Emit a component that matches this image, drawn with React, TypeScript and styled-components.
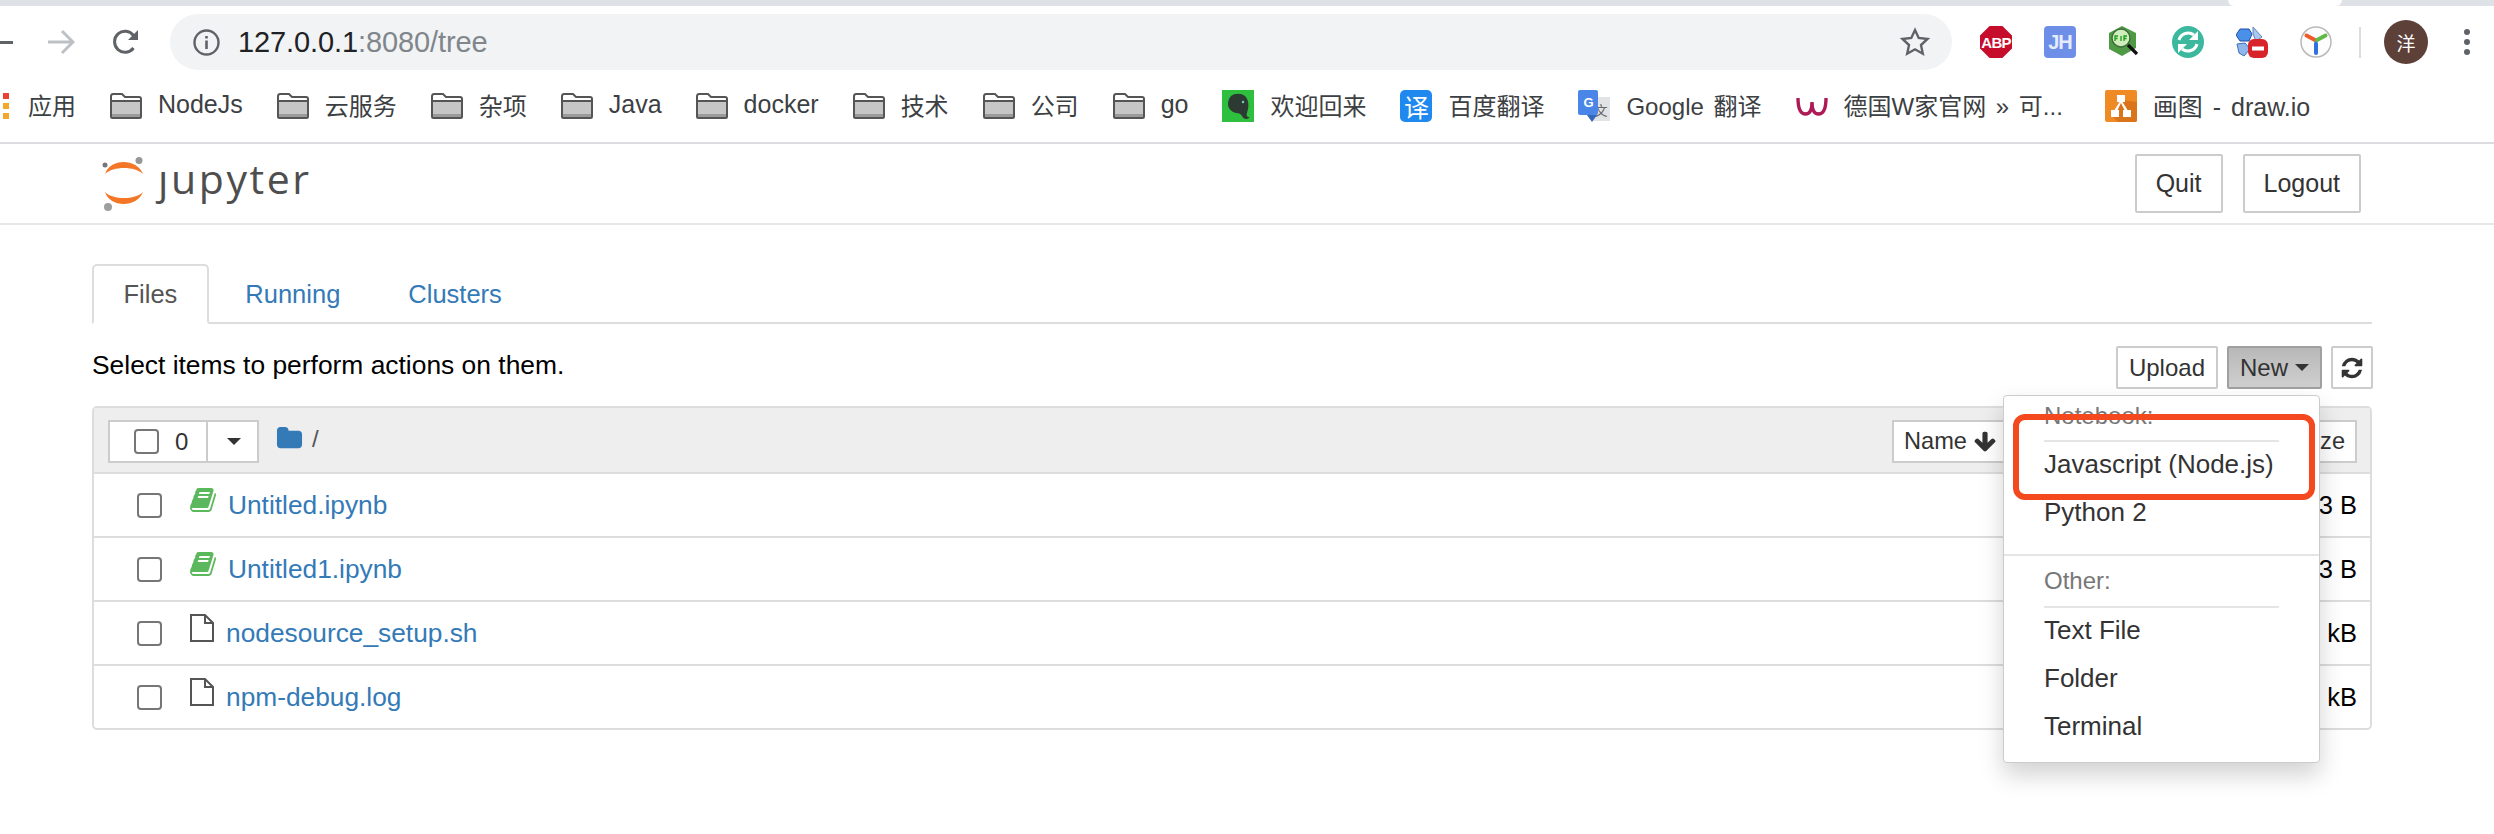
import { createGlobalStyle, styled } from 'styled-components';

const sans = `"Liberation Sans", "Noto Sans CJK SC", sans-serif`;

const GlobalStyle = createGlobalStyle`
  html, body {
    margin: 0;
    background: #fff;
    overflow: hidden;
  }
  * {
    box-sizing: border-box;
  }
`;

const Page = styled.div`
  position: relative;
  width: 2494px;
  height: 834px;
  overflow: hidden;
  font-family: ${sans};
  color: #333;
`;

/* browser chrome */

const TabStrip = styled.div`
  height: 6px;
  background: #dee1e6;
  padding-left: 2228px;
`;

const ActiveTabEdge = styled.div`
  width: 114px;
  height: 6px;
  background: #fff;
  border-radius: 0 0 6px 6px;
`;

const Toolbar = styled.div`
  display: flex;
  height: 70px;
  padding-top: 8px;
`;

const NavButtons = styled.div`
  display: flex;
  align-items: center;
  height: 56px;
`;

const BackStub = styled.span`
  width: 13px;
  height: 3px;
  background: #5f6368;
`;

const ForwardIcon = styled.svg`
  width: 28px;
  height: 26px;
  margin-left: 34px;
  fill: none;
  stroke: #bdc1c6;
  stroke-width: 3;
`;

const ReloadIcon = styled.svg`
  width: 28px;
  height: 28px;
  margin-left: 37px;
`;

const AddressBar = styled.div`
  display: flex;
  align-items: center;
  width: 1782px;
  height: 56px;
  margin-left: 30px;
  padding: 0 22px 0 23px;
  border-radius: 28px;
  background: #f1f3f4;
`;

const InfoIcon = styled.svg`
  width: 27px;
  height: 27px;
  margin-right: 18px;
`;

const Url = styled.div`
  font-size: 29px;
  color: #80868b;
  letter-spacing: -0.1px;
`;

const UrlHost = styled.span`
  color: #202124;
`;

const StarIcon = styled.svg`
  width: 30px;
  height: 30px;
  margin-left: auto;
  fill: none;
  stroke: #5f6368;
  stroke-width: 2.4;
`;

const Extensions = styled.div`
  display: flex;
  align-items: center;
  gap: 32px;
  height: 56px;
  margin-left: 28px;
`;

const ExtSvg = styled.svg`
  display: block;
  width: 32px;
  height: 32px;
`;

const AbpBadge = styled.span`
  display: flex;
  align-items: center;
  justify-content: center;
  width: 32px;
  height: 32px;
  background: #c70d2c;
  clip-path: polygon(30% 0, 70% 0, 100% 30%, 100% 70%, 70% 100%, 30% 100%, 0 70%, 0 30%);
  color: #fff;
  font-size: 15px;
  font-weight: 700;
  letter-spacing: -0.8px;
`;

const JhBadge = styled.span`
  display: flex;
  align-items: center;
  justify-content: center;
  width: 32px;
  height: 32px;
  border-radius: 4px;
  background: #6e8fe8;
  color: #e6ecfb;
  font-size: 20px;
  font-weight: 700;
  letter-spacing: -1px;
`;

const ToolbarDivider = styled.span`
  width: 2px;
  height: 31px;
  margin-left: 27px;
  background: #dadce0;
`;

const Avatar = styled.span`
  display: flex;
  align-items: center;
  justify-content: center;
  width: 44px;
  height: 44px;
  margin-left: 23px;
  border-radius: 50%;
  background: #5d4037;
  color: #fff;
  font-size: 19px;
`;

const MenuDots = styled.span`
  display: flex;
  flex-direction: column;
  gap: 4px;
  margin-left: 36px;
`;

const MenuDot = styled.span`
  width: 6px;
  height: 6px;
  border-radius: 50%;
  background: #5f6368;
`;

const BookmarkBar = styled.div`
  display: flex;
  align-items: center;
  gap: 34px;
  height: 68px;
  padding: 0 0 6px 3px;
  border-bottom: 2px solid #dadce0;
  font-size: 24px;
  word-spacing: 3px;
  color: #3c4043;
`;

const Bookmark = styled.div`
  display: flex;
  align-items: center;
  gap: 16px;
  white-space: nowrap;
`;

const BookmarkLabel = styled.span<{ $latin?: boolean; $trail?: number }>`
  margin-top: -3px;
  padding-right: ${(p) => p.$trail ?? 0}px;
  font-size: ${(p) => (p.$latin ? 25 : 24)}px;
`;

const AppsDots = styled.span`
  display: flex;
  flex-direction: column;
  gap: 4px;
  margin-right: 3px;
`;

const AppsDot = styled.span<{ $color: string }>`
  width: 6px;
  height: 6px;
  background: ${(p) => p.$color};
`;

const FolderSvg = styled.svg`
  display: block;
  width: 32px;
  height: 26px;
`;

const FaviconSvg = styled.svg`
  display: block;
  width: 32px;
  height: 32px;
`;

const BaiduFavicon = styled.span`
  display: flex;
  align-items: center;
  justify-content: center;
  width: 32px;
  height: 32px;
  border-radius: 5px;
  background: #2089f0;
  color: #fff;
  font-size: 25px;
`;

const GoogleFavicon = styled.span`
  position: relative;
  display: block;
  width: 32px;
  height: 32px;
`;

const GoogleBack = styled.span`
  position: absolute;
  right: 0;
  top: 7px;
  display: flex;
  align-items: center;
  justify-content: center;
  width: 19px;
  height: 24px;
  background: #e2e3e5;
  color: #666;
  font-size: 13px;
`;

const GoogleFront = styled.span`
  position: absolute;
  left: 0;
  top: 0;
  display: flex;
  align-items: center;
  justify-content: center;
  width: 20px;
  height: 25px;
  border-radius: 2px;
  background: #4a86e8;
  color: #fff;
  font-size: 13px;
  font-weight: 700;
`;

const GoogleTail = styled.span`
  position: absolute;
  left: 9px;
  top: 25px;
  border-top: 7px solid #3367b8;
  border-left: 5px solid transparent;
  border-right: 5px solid transparent;
`;

/* jupyter page */

const NavBar = styled.div`
  display: flex;
  align-items: center;
  justify-content: space-between;
  height: 81px;
  padding: 0 133px 0 102px;
  border-bottom: 2px solid #e7e7e7;
`;

const Brand = styled.div`
  display: flex;
  align-items: center;
  gap: 13px;
`;

const LogoMark = styled.svg`
  display: block;
  width: 43px;
  height: 54px;
`;

const LogoType = styled.span`
  margin-top: -10px;
  font-family: "Open Sans", sans-serif;
  font-size: 41px;
  letter-spacing: 2.6px;
  color: #4e4e4e;
  line-height: 1;
`;

const NavActions = styled.div`
  display: flex;
  gap: 20px;
`;

const NavButton = styled.button`
  height: 59px;
  padding: 0 19px;
  border: 2px solid #ccc;
  border-radius: 2px;
  background: #fff;
  color: #333;
  font: 25px ${sans};
`;

const Main = styled.div`
  padding: 39px 122px 0 92px;
`;

const TabBar = styled.div`
  display: flex;
  gap: 5px;
  height: 60px;
  border-bottom: 2px solid #ddd;
`;

const Tab = styled.div<{ $active?: boolean }>`
  display: flex;
  align-items: center;
  height: 60px;
  padding: 0 29.5px;
  border: 2px solid ${(p) => (p.$active ? '#ddd' : 'transparent')};
  border-bottom-color: ${(p) => (p.$active ? '#fff' : 'transparent')};
  border-radius: 5px 5px 0 0;
  background: ${(p) => (p.$active ? '#fff' : 'transparent')};
  color: ${(p) => (p.$active ? '#555' : '#337ab7')};
  font-size: 25.5px;
`;

const ActionRow = styled.div`
  display: flex;
  align-items: center;
  justify-content: space-between;
  height: 43px;
  margin: 22px -1px 17px 0;
`;

const Hint = styled.div`
  margin-top: -4px;
  color: #000;
  font-size: 26.4px;
`;

const ActionButtons = styled.div`
  display: flex;
  gap: 9px;
`;

const SmallButton = styled.button<{ $pressed?: boolean }>`
  display: flex;
  align-items: center;
  justify-content: center;
  gap: 7px;
  height: 43px;
  padding: 0 11px;
  border: 2px solid ${(p) => (p.$pressed ? '#a0a0a0' : '#ccc')};
  border-radius: 2px;
  background: ${(p) => (p.$pressed ? 'linear-gradient(#b8b8b8, #cfcfcf)' : '#fff')};
  color: #333;
  font: 24px ${sans};
`;

const RefreshButton = styled(SmallButton)`
  width: 42px;
  padding: 0;
`;

const Caret = styled.span`
  border-top: 7px solid #333;
  border-left: 7px solid transparent;
  border-right: 7px solid transparent;
`;

const Glyph = styled.svg<{ $size: number; $color?: string }>`
  display: block;
  flex: none;
  width: ${(p) => p.$size}px;
  height: ${(p) => p.$size}px;
  fill: ${(p) => p.$color ?? '#333'};
`;

const DropdownAnchor = styled.div`
  position: relative;
`;

const Dropdown = styled.div`
  position: absolute;
  top: 49px;
  right: 2px;
  z-index: 2;
  width: 317px;
  height: 368px;
  border: 1px solid #ccc;
  border-radius: 4px;
  background: #fff;
  box-shadow: 0 12px 24px rgba(0, 0, 0, 0.18);
`;

const MenuHeader = styled.div<{ $height: number; $lift: number }>`
  display: flex;
  align-items: center;
  height: ${(p) => p.$height}px;
  margin: 0 40px;
  padding-bottom: ${(p) => p.$lift}px;
  border-bottom: 2px solid #e5e5e5;
  color: #777;
  font-size: 24px;
`;

const MenuItem = styled.div`
  display: flex;
  align-items: center;
  height: 48px;
  padding: 0 0 3px 40px;
  color: #333;
  font-size: 26px;
`;

const MenuDivider = styled.div`
  height: 2px;
  margin-top: 16px;
  background: #e5e5e5;
`;

const FileTable = styled.div`
  border: 2px solid #ddd;
  border-radius: 5px;
`;

const TableHead = styled.div`
  display: flex;
  align-items: center;
  justify-content: space-between;
  height: 66px;
  padding: 3px 13px 0 14px;
  border-bottom: 2px solid #ddd;
  background: #eee;
`;

const HeadLeft = styled.div`
  display: flex;
  align-items: center;
`;

const SelectGroup = styled.div`
  display: flex;
  height: 43px;
  border: 2px solid #ccc;
  background: #fff;
`;

const SelectAll = styled.div`
  display: flex;
  align-items: center;
  gap: 16px;
  width: 98px;
  padding-left: 24px;
  border-right: 2px solid #ccc;
  font-size: 24px;
`;

const SelectMore = styled.div`
  display: flex;
  align-items: center;
  justify-content: center;
  width: 49px;
  padding-left: 2px;
`;

const Check = styled.input.attrs({ type: 'checkbox' })`
  appearance: none;
  display: block;
  flex: none;
  width: 25px;
  height: 25px;
  margin: 0;
  border: 2px solid #767676;
  border-radius: 4px;
  background: #fff;
`;

const Crumb = styled.div`
  display: flex;
  align-items: center;
  gap: 9px;
  margin: -6px 0 0 17px;
  color: #555;
  font-size: 24px;
`;

const SortGroup = styled.div`
  display: flex;
  justify-content: space-between;
  width: 465px;
  height: 43px;
  border: 2px solid #ccc;
  background: #fff;
`;

const SortButton = styled.div`
  display: flex;
  align-items: center;
  gap: 6px;
  padding: 0 10px;
  font-size: 23.6px;
`;

const FileRow = styled.div`
  display: flex;
  align-items: center;
  height: 64px;
  padding: 0 13px 0 43px;
  border-bottom: 2px solid #ddd;

  &:last-child {
    height: 62px;
    border-bottom: 0;
  }
`;

const RowIcon = styled.svg<{ $notebook?: boolean }>`
  display: block;
  flex: none;
  width: ${(p) => (p.$notebook ? 28 : 24)}px;
  height: 28px;
  margin: -10px ${(p) => (p.$notebook ? 10 : 12)}px 0 28px;
  fill: ${(p) => (p.$notebook ? '#5cb85c' : 'none')};
`;

const FileLink = styled.a`
  color: #337ab7;
  font-size: 26.3px;
  text-decoration: none;
`;

const FileSize = styled.span`
  margin-left: auto;
  color: #000;
  font-size: 25.5px;
`;

const Annotation = styled.div`
  position: absolute;
  left: 2013px;
  top: 414px;
  z-index: 3;
  width: 302px;
  height: 86px;
  border: 6px solid #f4481f;
  border-radius: 12px;
`;

const bookPath =
  'M1639 478q40 57 18 129l-275 906q-19 64-76.500 107.500t-122.500 43.500h-923q-77 0-148.500-53.500t-99.500-131.500q-24-67-2-127 0-4 3-27t4-37q1-8-3-21.500t-3-19.500q2-11 8-21t16.500-23.500 16.500-23.500q23-38 45-91.500t30-91.500q3-10 .5-30t-.5-28q3-11 17-28t17-23q21-36 42-92t25-90q1-9-2.500-32t.5-28q4-13 22-30.500t22-22.500q19-26 42.500-84.500t27.500-96.500q1-8-3-25.500t-2-26.500q2-8 9-18t18-23 17-21q8-12 16.500-30.500t15-35 16-36 19.500-32 26.500-23.500 36-11.500 47.500 5.500l-1 3q38-9 51-9h761q74 0 114 56t18 130l-274 906q-36 119-71.500 153.500t-128.500 34.500h-869q-27 0-38 15-11 16-1 43 24 70 144 70h923q29 0 56-15.500t35-41.500l300-987q7-22 5-57 38 15 59 43zm-1064 2q-4 13 2 22.500t20 9.500h608q13 0 25.500-9.500t16.500-22.500l21-64q4-13-2-22.500t-20-9.500h-608q-13 0-25.500 9.500t-16.500 22.500zm-83 256q-4 13 2 22.500t20 9.500h608q13 0 25.500-9.500t16.500-22.500l21-64q4-13-2-22.500t-20-9.500h-608q-13 0-25.500 9.500t-16.500 22.500z';

const refreshPath =
  'M1639 1056q0 5-1 7-64 268-268 434.500t-478 166.500q-146 0-282.500-55t-243.500-157l-129 129q-19 19-45 19t-45-19-19-45v-448q0-26 19-45t45-19h448q26 0 45 19t19 45-19 45l-137 137q71 66 161 102t187 36q134 0 250-65t186-179q11-17 53-117 8-23 30-23h192q13 0 22.500 9.500t9.500 22.500zm25-800v448q0 26-19 45t-45 19h-448q-26 0-45-19t-19-45 19-45l138-138q-148-137-349-137-134 0-250 65t-186 179q-11 17-53 117-8 23-30 23h-199q-13 0-22.500-9.500t-9.500-22.500v-7q65-268 270-434.500t480-166.500q146 0 284 55.500t245 156.500l130-129q19-19 45-19t45 19 19 45z';

const arrowDownPath =
  'M1675 832q0 53-37 90l-651 652q-39 37-91 37-53 0-90-37l-651-652q-38-36-38-90 0-53 38-91l74-75q39-37 91-37 53 0 90 37l294 294v-704q0-52 38-90t90-38h128q52 0 90 38t38 90v704l294-294q37-37 90-37 52 0 91 37l75 75q37 38 37 91z';

const folderPath =
  'M1728 608v704q0 92-66 158t-158 66h-1216q-92 0-158-66t-66-158v-960q0-92 66-158t158-66h320q92 0 158 66t66 158v32h672q92 0 158 66t66 158z';

const FolderIcon = () => (
  <FolderSvg viewBox="0 0 32 26">
    <path d="M2 9h28v15H2z" fill="#c6c6c6" />
    <path d="M2 21h28v3H2z" fill="#9b9b9b" />
    <path d="M1 3.500Q1 1 3 1h9l3 3h14q2 0 2 2v17.500q0 1.500-1.500 1.500h-27Q1 25 1 23.500zM1 8h30" fill="none" stroke="#555" strokeWidth="2" />
  </FolderSvg>
);

const EvernoteFavicon = () => (
  <FaviconSvg viewBox="0 0 32 32">
    <rect width="32" height="32" fill="#2fbf3f" />
    <path d="M9 6c4-3 10-3 14 0 3 3 4 8 3 13-1 4-2 6-1 7 1 2 3 0 2 2-2 2-6 1-7-2-1-2-3-3-6-3-4-1-8-4-8-9 0-3 1-6 3-8z" fill="#2d3a33" />
    <circle cx="21" cy="12" r="1.200" fill="#6fd0c0" />
  </FaviconSvg>
);

const WeidianFavicon = () => (
  <FaviconSvg viewBox="0 0 32 32">
    <path d="M2 8C2 18 4 24 9.500 24 14 24 16 20 16 12 16 20 18 24 22.500 24 28 24 30 18 30 8" fill="none" stroke="#ad1a56" strokeWidth="3.400" />
  </FaviconSvg>
);

const DrawioFavicon = () => (
  <FaviconSvg viewBox="0 0 32 32">
    <rect width="32" height="32" rx="2" fill="#f08a24" />
    <path d="M32 12v18a2 2 0 0 1-2 2H13L7 26l6-6 3-10z" fill="#d9741a" />
    <path d="M12 5h8v7h-2.500l5 8H26v7h-8v-7h1.500l-3.500-7-3.500 7H14v7H6v-7h3.500l5-8H12z" fill="#fff" />
  </FaviconSvg>
);

const bookmarks = [
  { label: 'NodeJs', latin: true },
  { label: '云服务' },
  { label: '杂项' },
  { label: 'Java', latin: true },
  { label: 'docker', latin: true },
  { label: '技术' },
  { label: '公司' },
  { label: 'go', latin: true },
];

const files = [
  { name: 'Untitled.ipynb', size: '683 B', notebook: true },
  { name: 'Untitled1.ipynb', size: '683 B', notebook: true },
  { name: 'nodesource_setup.sh', size: '14.9 kB', notebook: false },
  { name: 'npm-debug.log', size: '2.4 kB', notebook: false },
];

export default function App() {
  return (
    <Page>
      <GlobalStyle />
      <TabStrip>
        <ActiveTabEdge />
      </TabStrip>

      <Toolbar>
        <NavButtons>
          <BackStub />
          <ForwardIcon viewBox="0 0 28 26">
            <path d="M1 13h25M15 2l11 11-11 11" />
          </ForwardIcon>
          <ReloadIcon viewBox="0 0 28 28">
            <path d="M21.500 20a10.500 10.500 0 1 1 0-12.500" fill="none" stroke="#5f6368" strokeWidth="3" />
            <path d="M26 2v10H16z" fill="#5f6368" />
          </ReloadIcon>
        </NavButtons>
        <AddressBar>
          <InfoIcon viewBox="0 0 27 27">
            <circle cx="13.500" cy="13.500" r="12" fill="none" stroke="#5f6368" strokeWidth="2.400" />
            <path d="M12.200 11.500h2.600V20h-2.600zM12.200 7h2.600v2.600h-2.600z" fill="#5f6368" />
          </InfoIcon>
          <Url>
            <UrlHost>127.0.0.1</UrlHost>:8080/tree
          </Url>
          <StarIcon viewBox="0 0 30 30">
            <path d="M15 3l3.700 8 8.800 1-6.500 6 1.800 8.700L15 22.300 7.200 26.700 9 18l-6.500-6 8.800-1z" />
          </StarIcon>
        </AddressBar>
        <Extensions>
          <AbpBadge>ABP</AbpBadge>
          <JhBadge>JH</JhBadge>
          <ExtSvg viewBox="0 0 32 32">
            <path d="M14 0l14 7v15l-14 8L1 23V7z" fill="#4e9a45" />
            <circle cx="13" cy="12" r="9" fill="#cfeebb" stroke="#3d6b3a" strokeWidth="1.400" />
            <path d="M7 15v-5h3M7 12.500h2.500M13 10v5M16 15v-5h3M16 12.500h2.500" fill="none" stroke="#1a9a1a" strokeWidth="1.300" />
            <path d="M20 19l9 9" stroke="#111" strokeWidth="3.200" />
          </ExtSvg>
          <ExtSvg viewBox="0 0 32 32">
            <circle cx="16" cy="16" r="16" fill="#3cb89f" />
            <path d="M7 14a9.500 9.500 0 0 1 15-5" fill="none" stroke="#fff" strokeWidth="3" />
            <path d="M25 18a9.500 9.500 0 0 1-15 5" fill="none" stroke="#fff" strokeWidth="3" />
            <path d="M26 5v9h-9zM6 27v-9h9z" fill="#fff" />
          </ExtSvg>
          <ExtSvg viewBox="0 0 32 32">
            <path d="M4 3h9l3 5-3 7H4L0 9z" fill="#4a8fe8" stroke="#1d4fa8" />
            <path d="M17 1l9 10-6 4-3-7z" fill="#a9c6ee" stroke="#5f83b8" />
            <path d="M1 18l8-1 5 6-6 7-5-3z" fill="#8fb7ec" stroke="#3f6fb8" />
            <rect x="12" y="13" width="20" height="19" rx="6" fill="#d8232a" />
            <rect x="16" y="20.500" width="12" height="4" fill="#fff" />
          </ExtSvg>
          <ExtSvg viewBox="0 0 32 32">
            <circle cx="16" cy="16" r="15" fill="#fdfdfd" stroke="#b8b8b8" strokeWidth="1.500" />
            <path d="M6.500 9.500L15 14" fill="none" stroke="#ef5a2a" strokeWidth="4" strokeLinecap="round" />
            <path d="M25.500 9.500L17 14" fill="none" stroke="#5fbb46" strokeWidth="4" strokeLinecap="round" />
            <path d="M16 17.500V27" fill="none" stroke="#2f6fe0" strokeWidth="4" strokeLinecap="round" />
          </ExtSvg>
        </Extensions>
        <NavButtons>
          <ToolbarDivider />
          <Avatar>洋</Avatar>
          <MenuDots>
            <MenuDot />
            <MenuDot />
            <MenuDot />
          </MenuDots>
        </NavButtons>
      </Toolbar>

      <BookmarkBar>
        <Bookmark>
          <AppsDots>
            <AppsDot $color="#e94235" />
            <AppsDot $color="#f4a72b" />
            <AppsDot $color="#f4a72b" />
          </AppsDots>
          <BookmarkLabel>应用</BookmarkLabel>
        </Bookmark>
        {bookmarks.map((item) => (
          <Bookmark key={item.label}>
            <FolderIcon />
            <BookmarkLabel $latin={item.latin}>{item.label}</BookmarkLabel>
          </Bookmark>
        ))}
        <Bookmark>
          <EvernoteFavicon />
          <BookmarkLabel>欢迎回来</BookmarkLabel>
        </Bookmark>
        <Bookmark>
          <BaiduFavicon>译</BaiduFavicon>
          <BookmarkLabel>百度翻译</BookmarkLabel>
        </Bookmark>
        <Bookmark>
          <GoogleFavicon>
            <GoogleBack>文</GoogleBack>
            <GoogleFront>G</GoogleFront>
            <GoogleTail />
          </GoogleFavicon>
          <BookmarkLabel>Google 翻译</BookmarkLabel>
        </Bookmark>
        <Bookmark>
          <WeidianFavicon />
          <BookmarkLabel $trail={8}>德国W家官网 » 可...</BookmarkLabel>
        </Bookmark>
        <Bookmark>
          <DrawioFavicon />
          <BookmarkLabel $latin>画图 - draw.io</BookmarkLabel>
        </Bookmark>
      </BookmarkBar>

      <NavBar>
        <Brand>
          <LogoMark viewBox="0 0 43 54">
            <path d="M3 17C8 1 35 1 41 17 33 9 11 9 3 17z" fill="#f37726" />
            <path d="M3 35C8 51 35 51 41 35 33 43 11 43 3 35z" fill="#f37726" />
            <circle cx="37" cy="3.500" r="3.500" fill="#989798" />
            <circle cx="3" cy="8" r="2.500" fill="#767677" />
            <circle cx="6" cy="50" r="4" fill="#9e9e9e" />
          </LogoMark>
          <LogoType>ȷupyter</LogoType>
        </Brand>
        <NavActions>
          <NavButton>Quit</NavButton>
          <NavButton>Logout</NavButton>
        </NavActions>
      </NavBar>

      <Main>
        <TabBar>
          <Tab $active>Files</Tab>
          <Tab>Running</Tab>
          <Tab>Clusters</Tab>
        </TabBar>

        <ActionRow>
          <Hint>Select items to perform actions on them.</Hint>
          <ActionButtons>
            <SmallButton>Upload</SmallButton>
            <DropdownAnchor>
              <SmallButton $pressed>
                New
                <Caret />
              </SmallButton>
              <Dropdown>
                <MenuHeader $height={46} $lift={5}>Notebook:</MenuHeader>
                <MenuItem>Javascript (Node.js)</MenuItem>
                <MenuItem>Python 2</MenuItem>
                <MenuDivider />
                <MenuHeader $height={52} $lift={1}>Other:</MenuHeader>
                <MenuItem>Text File</MenuItem>
                <MenuItem>Folder</MenuItem>
                <MenuItem>Terminal</MenuItem>
              </Dropdown>
            </DropdownAnchor>
            <RefreshButton>
              <Glyph $size={24} viewBox="0 0 1792 1792">
                <path d={refreshPath} />
              </Glyph>
            </RefreshButton>
          </ActionButtons>
        </ActionRow>

        <FileTable>
          <TableHead>
            <HeadLeft>
              <SelectGroup>
                <SelectAll>
                  <Check />0
                </SelectAll>
                <SelectMore>
                  <Caret />
                </SelectMore>
              </SelectGroup>
              <Crumb>
                <Glyph $size={27} $color="#337ab7" viewBox="0 0 1792 1792">
                  <path d={folderPath} />
                </Glyph>
                /
              </Crumb>
            </HeadLeft>
            <SortGroup>
              <SortButton>
                Name
                <Glyph $size={24} viewBox="0 0 1792 1792">
                  <path d={arrowDownPath} />
                </Glyph>
              </SortButton>
              <SortButton>File size</SortButton>
            </SortGroup>
          </TableHead>
          {files.map((file) => (
            <FileRow key={file.name}>
              <Check />
              {file.notebook ? (
                <RowIcon $notebook viewBox="0 0 1792 1792">
                  <path d={bookPath} />
                </RowIcon>
              ) : (
                <RowIcon viewBox="0 0 24 28">
                  <path d="M1 1h14l8 8v18H1zM15 1v8h8" stroke="#555" strokeWidth="2" />
                </RowIcon>
              )}
              <FileLink href="#">{file.name}</FileLink>
              <FileSize>{file.size}</FileSize>
            </FileRow>
          ))}
        </FileTable>
      </Main>

      <Annotation />
    </Page>
  );
}
